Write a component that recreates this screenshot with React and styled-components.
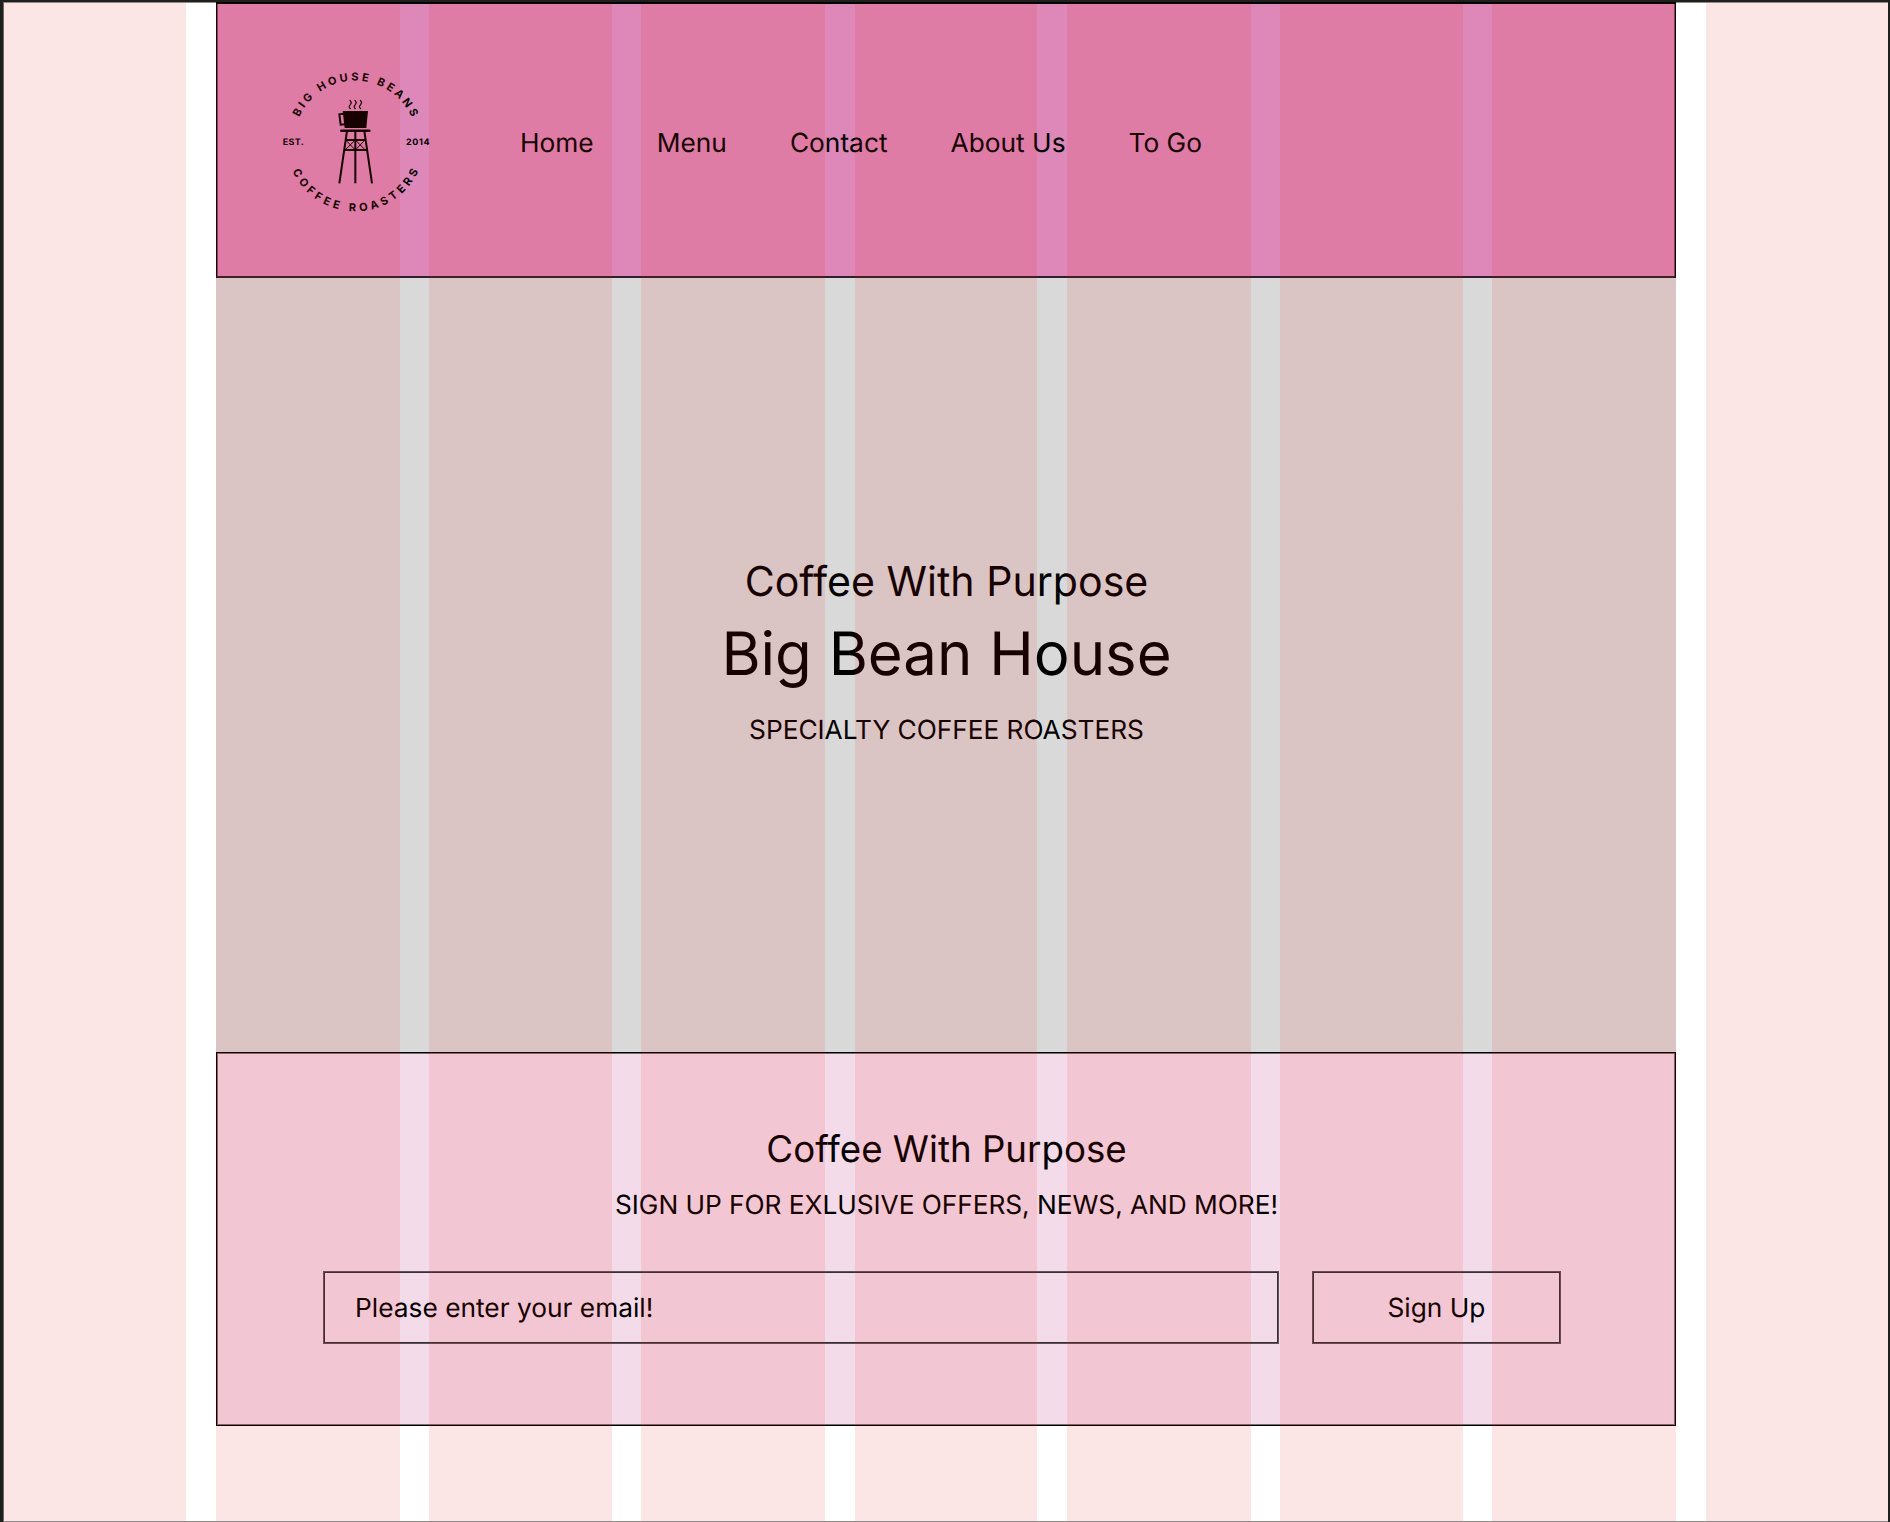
import React from "react";
import styled, { createGlobalStyle } from "styled-components";

const GlobalStyle = createGlobalStyle`
  *, *::before, *::after { box-sizing: border-box; }
  body { margin: 0; background: #1f1f1e; }
`;

const Canvas = styled.main`
  position: relative;
  width: 1890px;
  height: 1522px;
  padding: 2px 2px 0 3px;
  background: #1f1f1e;
  font-family: Inter, "Liberation Sans", sans-serif;
  color: #000;
  text-rendering: geometricPrecision;
  overflow: hidden;
`;

const Frame = styled.div`
  height: 1520px;
  padding: 0 212px 0 212px;
  border: 1px solid #8f8988;
  border-left-color: #6e6867;
  border-right-width: 0;
  background: #fff;
`;

const GridOverlay = styled.div`
  position: absolute;
  top: 3px;
  left: 4px;
  width: 1884px;
  height: 1518px;
  display: flex;
  pointer-events: none;
`;

const GridColumn = styled.div`
  flex: none;
  width: ${(p) => p.$width}px;
  margin-right: ${(p) => p.$gutter}px;
  background: ${(p) =>
    p.$outer
      ? "rgba(217, 6, 0, 0.1)"
      : "linear-gradient(rgba(235, 15, 8, 0.1) 1423px, rgba(217, 6, 0, 0.1) 1423px)"};
`;

const Header = styled.header`
  display: flex;
  align-items: flex-start;
  height: 276px;
  margin-top: -1px;
  padding: 56px 0 0 53px;
  border: 1px solid #000;
  border-top-width: 2px;
  border-bottom: 2px solid #30202a;
  box-shadow: inset 1px 0 rgba(0, 0, 0, 0.45), inset -1px 0 rgba(0, 0, 0, 0.45);
  background: #dd88b8;
`;

const Logo = styled.svg`
  display: block;
  flex: none;
  width: 170px;
  height: 165px;
  font-weight: 700;
`;

const Nav = styled.nav`
  display: flex;
  gap: 63px;
  margin: 68px 0 0 80px;
`;

const NavLink = styled.a`
  font-size: 26.3px;
  line-height: 32px;
  white-space: nowrap;
`;

const Hero = styled.section`
  display: flex;
  flex-direction: column;
  align-items: center;
  height: 774px;
  padding: 278px 0 0 1px;
  background: #d9d9d9;
`;

const Line = styled.p`
  margin: ${(p) => p.$top || 0}px 0 0;
  font-size: ${(p) => p.$size}px;
  line-height: ${(p) => p.$height}px;
  letter-spacing: ${(p) => p.$tracking || 0}px;
  font-weight: 400;
  white-space: nowrap;
`;

const Newsletter = styled.section`
  display: flex;
  flex-direction: column;
  align-items: center;
  height: 374px;
  padding: 73px 0 0 1px;
  border: 1px solid #000;
  box-shadow: inset 0 0 0 1px rgba(0, 0, 0, 0.5);
  background: #f3dbe9;
`;

const Form = styled.div`
  display: flex;
  gap: 33px;
  align-self: stretch;
  margin: 49px 0 0 105px;
`;

const Field = styled.div`
  display: flex;
  align-items: center;
  justify-content: ${(p) => (p.$center ? "center" : "flex-start")};
  width: ${(p) => p.$width}px;
  height: 73px;
  padding: 2px 0 0 ${(p) => p.$pad || 0}px;
  border: 1px solid rgba(0, 0, 0, 0.62);
  box-shadow: inset 0 0 0 1px rgba(0, 0, 0, 0.78);
  font-size: 26.3px;
  line-height: 32px;
`;

function TowerLogo() {
  return (
    <Logo viewBox="0 0 510 495" fill="#000" stroke="none">
      <defs>
        <path id="arcTop" d="M72 246 A184 184 0 0 1 440 246" />
        <path id="arcBottom" d="M48 246 A208 208 0 0 0 464 246" />
      </defs>
      <text fontSize="33" letterSpacing="8.9" textAnchor="middle">
        <textPath href="#arcTop" startOffset="50.8%">BIG HOUSE BEANS</textPath>
      </text>
      <text fontSize="33" letterSpacing="11.4" textAnchor="middle">
        <textPath href="#arcBottom" startOffset="50.9%">COFFEE ROASTERS</textPath>
      </text>
      <text x="38" y="254" fontSize="27" textLength="63">EST.</text>
      <text x="408" y="254" fontSize="27" textLength="71">2014</text>
      <g fill="none" stroke="#000" strokeWidth="3.5" strokeLinecap="round">
        <path d="M240 121 q7 6 1 13 q-7 7 0 12" />
        <path d="M255 121 q7 6 1 13 q-7 7 0 12" />
        <path d="M271 121 q7 6 1 13 q-7 7 0 12" />
      </g>
      <path d="M218 153H294L289 204H224Z" />
      <g fill="none" stroke="#000" strokeWidth="6">
        <path d="M221 161L208 163L212 194L225 193" />
        <path d="M231 213L208 370M283 213L306 370M256 213V370" />
        <path d="M227 240H287M222 270H292" />
        <path d="M214 212H298" strokeWidth="7.5" strokeLinecap="round" />
        <path d="M229 242L254 268M254 242L227 268M258 242L284 268M283 242L258 268" strokeWidth="3" />
      </g>
    </Logo>
  );
}

const links = ["Home", "Menu", "Contact", "About Us", "To Go"];

const columns = [
  [182, 30],
  [184, 29],
  [183, 29],
  [184, 30],
  [182, 30],
  [184, 29],
  [183, 29],
  [184, 30],
  [182, 0],
];

export default function App() {
  return (
    <Canvas>
      <GlobalStyle />
      <Frame>
        <Header>
          <TowerLogo />
          <Nav>
            {links.map((label) => (
              <NavLink key={label}>{label}</NavLink>
            ))}
          </Nav>
        </Header>
        <Hero>
          <Line $size={41.1} $height={50}>Coffee With Purpose</Line>
          <Line as="h1" $size={59.9} $height={72} $top={12}>Big Bean House</Line>
          <Line $size={26.3} $height={32} $top={25} $tracking={-0.05}>SPECIALTY COFFEE ROASTERS</Line>
        </Hero>
        <Newsletter>
          <Line $size={36.7} $height={45}>Coffee With Purpose</Line>
          <Line $size={26.3} $height={32} $top={19} $tracking={-0.06}>
            SIGN UP FOR EXLUSIVE OFFERS, NEWS, AND MORE!
          </Line>
          <Form>
            <Field $width={956} $pad={31}>Please enter your email!</Field>
            <Field $width={249} $center>Sign Up</Field>
          </Form>
        </Newsletter>
      </Frame>
      <GridOverlay>
        {columns.map(([width, gutter], i) => (
          <GridColumn
            key={i}
            $width={width}
            $gutter={gutter}
            $outer={i === 0 || i === columns.length - 1}
          />
        ))}
      </GridOverlay>
    </Canvas>
  );
}
